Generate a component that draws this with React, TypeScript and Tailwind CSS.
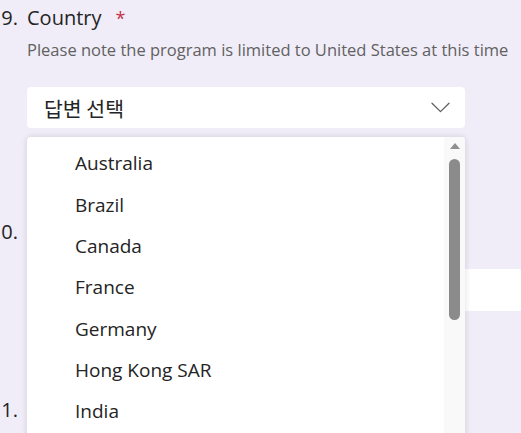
import React from "react";

const countries = ["Australia", "Brazil", "Canada", "France", "Germany", "Hong Kong SAR", "India"];

function QuestionTitle({ num, title, required }: { num: string; title?: string; required?: boolean }) {
  return (
    <div className="flex items-center h-[28px] text-[20px] text-[#242424]">
      <span className="w-[40px] -ml-[49px] text-right">{num}</span>
      {title && <span className="ml-[9px]">{title}</span>}
      {required && <span className="ml-[14px] text-[#c4314b] text-[18px]">*</span>}
    </div>
  );
}

function Chevron() {
  return (
    <svg width="19" height="11" viewBox="0 0 19 11" fill="none" className="text-[#616161]">
      <path d="M1 1.2 L9.5 9.6 L18 1.2" stroke="currentColor" strokeWidth="1.3" strokeLinecap="round" strokeLinejoin="round" />
    </svg>
  );
}

function DropdownList() {
  return (
    <div className="absolute left-[27px] top-[137px] w-[438px] h-[320px] bg-white rounded-[4px] shadow-[0_0_6px_rgba(0,0,0,0.14)] flex overflow-hidden">
      <ul className="flex-1 py-[6px]">
        {countries.map((c) => (
          <li key={c} className="h-[41.3px] flex items-center pl-[48px] text-[19px] text-[#242424]">
            {c}
          </li>
        ))}
      </ul>
      <div className="w-[21px] bg-[#f9f9f9] flex flex-col items-center pt-[6px]">
        <svg width="10" height="6" viewBox="0 0 10 6">
          <path d="M5 0 L10 6 L0 6 Z" fill="#8f8f8f" />
        </svg>
        <div className="mt-[10px] w-[11px] h-[161px] rounded-full bg-[#8b8b8b]" />
      </div>
    </div>
  );
}

export default function App() {
  return (
    <div className="relative w-[521px] h-[433px] overflow-hidden bg-[#f0edf8] font-['Segoe_UI','Open_Sans',sans-serif]">
      <div className="pl-[27px] pt-[4px]">
        <QuestionTitle num="9." title="Country" required />
        <p className="mt-[8px] h-[20px] leading-[20px] text-[16.5px] text-[#616161] whitespace-nowrap">
          Please note the program is limited to United States at this time
        </p>
        <button className="mt-[27px] w-[438px] h-[41px] bg-white rounded-[4px] flex items-center justify-between pl-[17px] pr-[15px]">
          <span className="text-[20.5px] leading-[28px] text-[#242424] font-['Noto_Sans_CJK_KR',sans-serif]">답변 선택</span>
          <Chevron />
        </button>

        <div className="mt-[90px]">
          <QuestionTitle num="10." />
        </div>
        <div className="mt-[23px] w-[520px] h-[42px] bg-white rounded-[4px]" />

        <div className="mt-[85px]">
          <QuestionTitle num="11." />
        </div>
      </div>

      <DropdownList />
    </div>
  );
}
